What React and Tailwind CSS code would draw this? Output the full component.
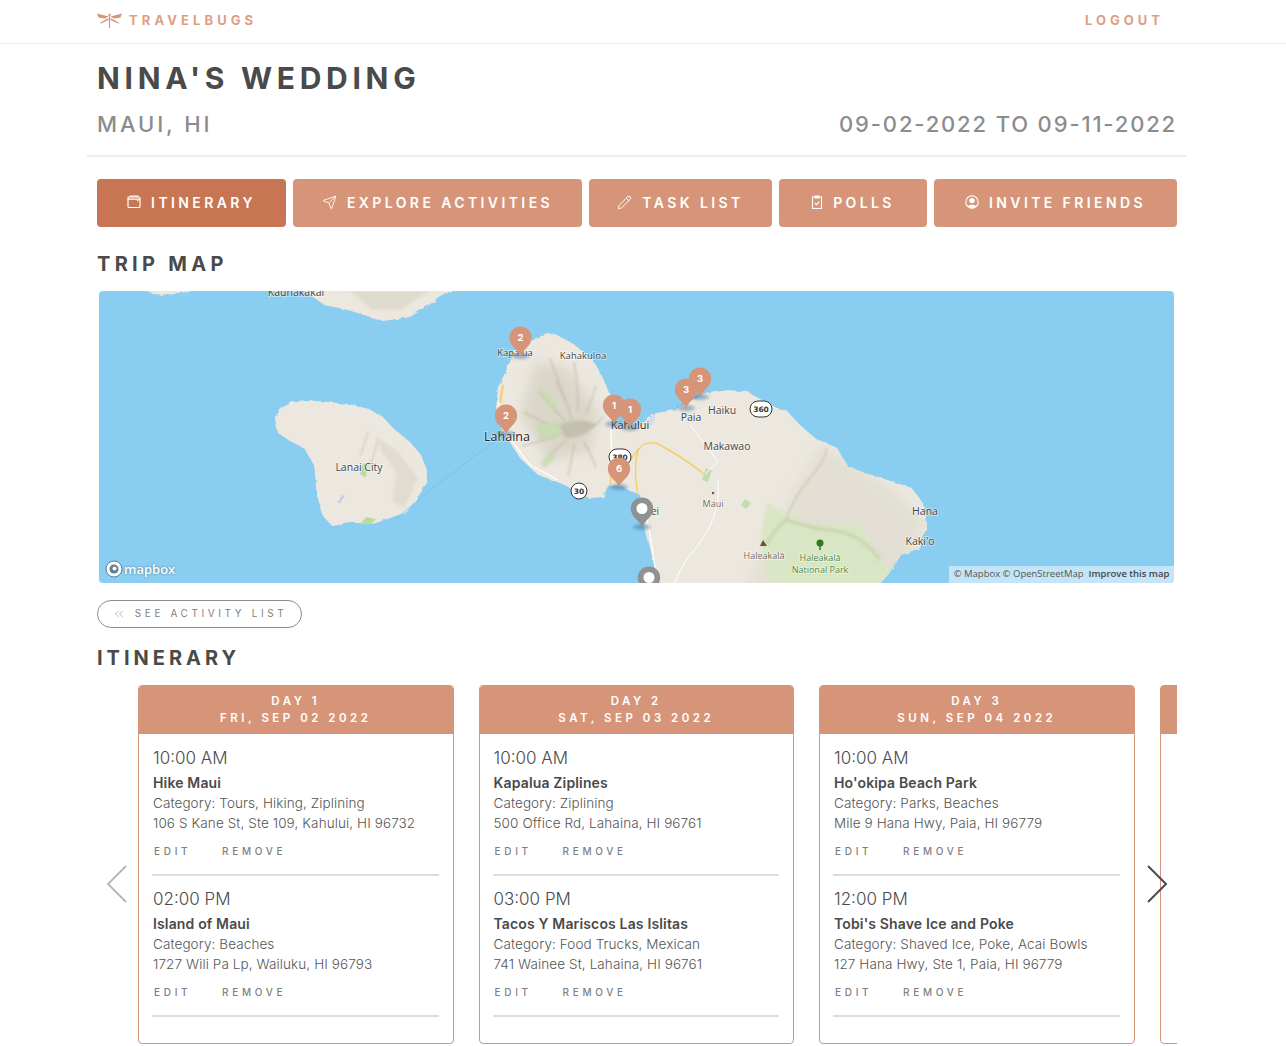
import React from "react";
import { Send, Pencil, ChevronsLeft } from "lucide-react";

const TABS = [
  { label: "ITINERARY", width: "w-[189px]", active: true, icon: "calendar" },
  { label: "EXPLORE ACTIVITIES", width: "w-[289px]", icon: "send" },
  { label: "TASK LIST", width: "w-[183px]", icon: "pencil" },
  { label: "POLLS", width: "w-[148px]", icon: "clipboard" },
  { label: "INVITE FRIENDS", width: "w-[243px]", icon: "user" },
];

const DAYS = [
  {
    day: "DAY 1",
    date: "FRI, SEP 02 2022",
    items: [
      { time: "10:00 AM", name: "Hike Maui", category: "Category: Tours, Hiking, Ziplining", address: "106 S Kane St, Ste 109, Kahului, HI 96732" },
      { time: "02:00 PM", name: "Island of Maui", category: "Category: Beaches", address: "1727 Wili Pa Lp, Wailuku, HI 96793" },
    ],
  },
  {
    day: "DAY 2",
    date: "SAT, SEP 03 2022",
    items: [
      { time: "10:00 AM", name: "Kapalua Ziplines", category: "Category: Ziplining", address: "500 Office Rd, Lahaina, HI 96761" },
      { time: "03:00 PM", name: "Tacos Y Mariscos Las Islitas", category: "Category: Food Trucks, Mexican", address: "741 Wainee St, Lahaina, HI 96761" },
    ],
  },
  {
    day: "DAY 3",
    date: "SUN, SEP 04 2022",
    items: [
      { time: "10:00 AM", name: "Ho'okipa Beach Park", category: "Category: Parks, Beaches", address: "Mile 9 Hana Hwy, Paia, HI 96779" },
      { time: "12:00 PM", name: "Tobi's Shave Ice and Poke", category: "Category: Shaved Ice, Poke, Acai Bowls", address: "127 Hana Hwy, Ste 1, Paia, HI 96779" },
    ],
  },
];

const PINS = [
  { x: 520.5, y: 356, label: "2" },
  { x: 506, y: 434, label: "2" },
  { x: 630, y: 428, label: "1" },
  { x: 614, y: 424, label: "1" },
  { x: 700, y: 397, label: "3" },
  { x: 686, y: 408, label: "3" },
  { x: 619, y: 487, label: "6" },
  { x: 642, y: 527, gray: true },
  { x: 649, y: 596, gray: true },
];

const LABELS = [
  { x: 296, y: 296, text: "Kaunakakai", size: 10.5 },
  { x: 583, y: 359, text: "Kahakuloa", size: 9.5 },
  { x: 515, y: 356, text: "Kapalua", size: 9.5 },
  { x: 507, y: 441, text: "Lahaina", size: 12.5, dark: true },
  { x: 359, y: 471, text: "Lanai City", size: 10.5 },
  { x: 630, y: 429, text: "Kahului", size: 11, dark: true },
  { x: 691, y: 421, text: "Paia", size: 10.5 },
  { x: 722, y: 414, text: "Haiku", size: 10.5 },
  { x: 727, y: 450, text: "Makawao", size: 10.5 },
  { x: 713, y: 507, text: "Maui", size: 9, color: "#7a6a5e" },
  { x: 655, y: 515, text: "ei", size: 10 },
  { x: 925, y: 515, text: "Hana", size: 10.5 },
  { x: 920, y: 545, text: "Kaki'o", size: 10.5 },
  { x: 764, y: 559, text: "Haleakalā", size: 9, color: "#7a6a5e" },
  { x: 820, y: 561, text: "Haleakalā", size: 9, color: "#4d8a3e" },
  { x: 820, y: 573, text: "National Park", size: 9, color: "#4d8a3e" },
];

// ridges running out from the west maui summit
const RIDGES = [
  "M572 420Q566 400 556 382",
  "M566 422Q550 405 540 392",
  "M560 428Q540 422 524 412",
  "M560 434Q540 442 522 446",
  "M566 440Q552 452 544 466",
  "M574 444Q572 460 568 476",
  "M584 442Q592 456 596 468",
  "M590 428Q598 424 604 416",
  "M586 414Q592 400 596 386",
  "M578 412Q578 385 574 362",
  "M570 412Q560 385 550 358",
];

const MAUI_COAST =
  "M510 362L515 350 522 345 534 338 553 333 572 343 593 360 603 378 610 395 612 420 625 427 640 425 656 413 675 410 690 401 705 393 720 390 747 391 760 399 777 408 786 410 800 425 815 438 837 448 848 467 878 477 912 488 924 505 927 525 920 548 901 555 890 572 875 590 660 590 651 552 645 528 640 495 619 485 608 486 603 497 589 498 565 485 538 475 520 458 503 432 496 408 498 388Z";

const TabIcon = ({ name }) => {
  if (name === "calendar") {
    return (
      <svg width="14" height="14" viewBox="0 0 14 14" fill="none" stroke="#fff" strokeWidth="1.2">
        <rect x="1" y="2" width="12" height="10.5" rx="1" />
        <path d="M1 4.2h12M2.5 1.2h9" />
        <rect x="10" y="5" width="1.4" height="1.4" fill="#fff" stroke="none" />
      </svg>
    );
  }
  if (name === "send") return <Send size={15} strokeWidth={1.4} color="#fff" />;
  if (name === "pencil") return <Pencil size={15} strokeWidth={1.5} color="#fff" />;
  if (name === "clipboard") {
    return (
      <svg width="12" height="14" viewBox="0 0 12 14" fill="none" stroke="#fff" strokeWidth="1.1">
        <rect x="1.5" y="2" width="9" height="11.5" />
        <path d="M4 1h4v2H4z" fill="#fff" />
        <path d="M4 8l1.6 1.6L8.2 6.6" />
      </svg>
    );
  }
  return (
    <svg width="14" height="14" viewBox="0 0 14 14">
      <circle cx="7" cy="7" r="6.2" fill="none" stroke="#fff" strokeWidth="1.1" />
      <circle cx="7" cy="5.6" r="2.7" fill="#fff" />
      <path d="M2.8 11.2C4 9.2 10 9.2 11.2 11.2 10 12.8 8.5 13.2 7 13.2S4 12.8 2.8 11.2Z" fill="#fff" />
    </svg>
  );
};

const Pin = ({ x, y, label, gray }) => (
  <g transform={`translate(${x} ${y})`}>
    <ellipse cx="0" cy="0" rx="9" ry="3" fill="#3f6f8f" opacity="0.45" filter="url(#soft)" />
    <path
      d="M0 0C-3-7-11.2-10-11.2-18.4A11.2 11.2 0 0 1 11.2-18.4C11.2-10 3-7 0 0Z"
      fill={gray ? "#8f9193" : "#d69579"}
    />
    {gray ? (
      <circle cx="0" cy="-18.5" r="5.5" fill="#fff" />
    ) : (
      <text x="0" y="-15" textAnchor="middle" fontSize="9.5" fontWeight="700" fill="#fff" fontFamily="Inter, sans-serif">
        {label}
      </text>
    )}
  </g>
);

const RouteShield = ({ x, y, text, wide }) => (
  <g>
    <rect
      x={x - (wide ? 11 : 8)}
      y={y - 8}
      width={wide ? 22 : 16}
      height="16"
      rx="8"
      fill="#fff"
      stroke="#333"
      strokeWidth="1"
    />
    <text x={x} y={y + 3} textAnchor="middle" fontSize="7.5" fontWeight="700" fill="#333" fontFamily="'DejaVu Sans', sans-serif">
      {text}
    </text>
  </g>
);

const TripMap = () => (
  <div className="relative ml-[2px] h-[292px] w-[1075px] overflow-hidden rounded-[4px] bg-[#89cdf0]">
    <svg viewBox="99 291 1075 292" width="1075" height="292" className="block">
      <defs>
        <filter id="ridge" x="-20%" y="-20%" width="140%" height="140%">
          <feGaussianBlur stdDeviation="0.8" />
        </filter>
        <filter id="soft" x="-50%" y="-50%" width="200%" height="200%">
          <feGaussianBlur stdDeviation="1.5" />
        </filter>
        <filter id="softer" x="-30%" y="-30%" width="160%" height="160%">
          <feGaussianBlur stdDeviation="6" />
        </filter>
        <filter id="rugged" x="-5%" y="-5%" width="110%" height="110%">
          <feTurbulence type="fractalNoise" baseFrequency="0.14" numOctaves="2" seed="4" />
          <feDisplacementMap in="SourceGraphic" scale="4" />
        </filter>
        <clipPath id="maui">
          <path d={MAUI_COAST} />
        </clipPath>
      </defs>

      {/* molokai along the top edge */}
      <g filter="url(#rugged)">
        <path d="M128 285L162 296 228 285ZM297 285L324 305 348 310 383 321 410 317 460 285Z" fill="#ece8e0" />
      </g>
      <path d="M350 291L372 310 400 310 430 291Z" fill="#d9d5c6" opacity="0.7" filter="url(#soft)" />

      {/* lanai */}
      <path
        filter="url(#rugged)"
        d="M274 418L283 407 293 402 317 401 348 404 369 409 383 417 393 428 410 442 421 455 427 470 426 485 417 498 407 512 390 518 376 523 352 523 332 526 324 517 317 498 317 482 314 465 304 448 288 440 277 432Z"
        fill="#ece8e0"
      />
      <path d="M376 436L398 452 418 478 404 508 392 500 396 472 382 452Z" fill="#dcd8ca" opacity="0.75" filter="url(#soft)" />
      <path d="M368 432Q364 446 360 456M378 440Q374 456 368 470" stroke="#d2cebd" strokeWidth="1.5" fill="none" filter="url(#ridge)" />
      <path d="M360 474L363 463 367 466 366 478Z" fill="#bcdc9f" />
      <path d="M360 524L366 517 376 519 372 524Z" fill="#bcdc9f" />
      <path d="M337 503L342 495 345 496 340 503Z" fill="#c5cfe8" />
      <path d="M395 520L430 490 480 452 497 440" fill="none" stroke="#7fbfe0" strokeWidth="0.8" />

      {/* maui */}
      <path filter="url(#rugged)" d={MAUI_COAST} fill="#ece8e0" />
      <g clipPath="url(#maui)">
        <path d="M535 362L568 368 598 412 590 452 548 460 520 415Z" fill="#d6d2c2" opacity="0.8" filter="url(#softer)" />
        <g stroke="#bcb8a6" strokeWidth="1.6" opacity="0.6" fill="none" filter="url(#ridge)">
          {RIDGES.map((d) => (
            <path key={d} d={d} />
          ))}
        </g>
        <path d="M558 426Q578 416 596 424Q586 438 566 438Z" fill="#b9b5a3" opacity="0.7" filter="url(#soft)" />
        <path d="M537 425L560 420 562 434 540 440Z" fill="#c4dcab" opacity="0.75" filter="url(#soft)" />
        <path d="M540 385L552 398 558 412 546 404Z" fill="#c4dcab" opacity="0.65" filter="url(#soft)" />
        <path d="M540 462L552 450 556 458 546 468Z" fill="#c4dcab" opacity="0.65" filter="url(#soft)" />
        <path d="M820 445L790 500 775 530 745 590 900 590 925 520 880 480Z" fill="#dfdbce" opacity="0.7" filter="url(#softer)" />
        <path d="M766 502L809 525 860 525 892 573 863 590 799 590 770 580 760 543Z" fill="#d9e7c4" opacity="0.9" filter="url(#ridge)" />
        <path d="M766 545Q775 528 786 520Q810 528 830 530Q860 532 880 560" fill="none" stroke="#bcc6a3" strokeWidth="2.5" opacity="0.7" filter="url(#soft)" />
        <path d="M786 520Q792 500 810 478T826 448" fill="none" stroke="#d2cebd" strokeWidth="2" filter="url(#ridge)" />
        <path d="M702 480L706 468 712 470 708 482Z" fill="#c4dcab" />
        <path d="M741 505L745 499 751 503 746 509Z" fill="#c4dcab" />
        <path d="M503 385L500 403" stroke="#f2cf5f" strokeWidth="2" fill="none" />
        <path d="M498 400L505 432 530 465 558 480" stroke="#fff" strokeWidth="1.2" fill="none" />
        <path d="M506 350L497 392" stroke="#fff" strokeWidth="1.2" fill="none" />
        <path d="M611 430L612 470 610 485" stroke="#fff" strokeWidth="1.3" fill="none" />
        <path d="M610 486L612 468" stroke="#f2cf5f" strokeWidth="1.6" fill="none" />
        <path d="M638 448Q632 475 640 503" stroke="#f2cf5f" strokeWidth="1.4" fill="none" />
        <path d="M625 470Q632 456 640 448Q642 442 656 443Q680 455 704 474" stroke="#f2cf5f" strokeWidth="1.4" fill="none" />
        <path d="M705 474L718 462Q710 450 690 425" stroke="#fff" strokeWidth="1" fill="none" />
        <path d="M718 480Q722 520 690 555Q678 570 673 590" stroke="#fff" strokeWidth="1" fill="none" />
        <path d="M645 510Q652 540 658 590" stroke="#fff" strokeWidth="1.2" fill="none" />
        <path d="M655 420L650 428 648 420 655 412Z" fill="#d5dbe9" />
      </g>

      <circle cx="713" cy="493" r="1.2" fill="#7a4b34" />
      <path d="M763 540L760 546 767 546Z" fill="#7a4b34" />
      <path d="M820 545V550" stroke="#2f7a1f" strokeWidth="1.5" />
      <circle cx="820" cy="543" r="3.5" fill="#2f7a1f" />

      <RouteShield x={761} y={409} text="360" wide />
      <RouteShield x={620} y={457} text="380" wide />
      <RouteShield x={579} y={491} text="30" />

      {LABELS.map((label) => (
        <text
          key={label.text + label.x}
          x={label.x}
          y={label.y}
          textAnchor="middle"
          fontSize={label.size}
          fill={label.color || (label.dark ? "#222" : "#444")}
          stroke="#fff"
          strokeOpacity="0.55"
          strokeWidth="1.5"
          paintOrder="stroke"
          fontFamily="'Open Sans', sans-serif"
        >
          {label.text}
        </text>
      ))}

      {PINS.map((pin, i) => (
        <Pin key={i} {...pin} />
      ))}
    </svg>

    <div className="absolute bottom-[5px] left-[6px] flex items-center gap-[1px]">
      <svg width="18" height="18" viewBox="0 0 18 18">
        <circle cx="9" cy="9" r="8" fill="#fff" stroke="#5a7f93" strokeWidth="1" />
        <circle cx="9" cy="9" r="4.5" fill="#5a7f93" />
        <circle cx="9.5" cy="8.5" r="2" fill="#fff" />
      </svg>
      <span className="font-['Open_Sans',sans-serif] text-[13px] leading-none font-semibold text-white [text-shadow:0_0_2px_#4a6f85]">
        mapbox
      </span>
    </div>
    <div className="absolute right-0 bottom-0 flex h-[17px] w-[225px] items-center justify-center gap-[5px] rounded-br-[4px] bg-[#c4e5f7] font-['Open_Sans',sans-serif] text-[9.5px] whitespace-nowrap text-[#555]">
      <span>© Mapbox © OpenStreetMap</span>
      <span className="font-semibold text-[#444]">Improve this map</span>
    </div>
  </div>
);

const Activity = ({ item }) => (
  <div className="border-b-2 border-[#dcdcdc] pt-[12px] pb-[15px] last:pt-[11px]">
    <div className="pl-[1px]">
      <div className="text-[17px] leading-[24px] font-light tracking-[0px] text-[#4a4a4a]">{item.time}</div>
      <div className="mt-[3px] text-[14px] leading-[20px] font-semibold tracking-[0.15px] whitespace-nowrap text-[#4a4a4a]">
        {item.name}
      </div>
      <div className="text-[13.5px] leading-[20px] font-light tracking-[0.1px] whitespace-nowrap text-[#555]">
        {item.category}
      </div>
      <div className="text-[13.5px] leading-[20px] font-light tracking-[0.1px] whitespace-nowrap text-[#555]">
        {item.address}
      </div>
      <div className="mt-[10px] flex pl-[1px] text-[10px] leading-[16px] font-medium tracking-[3.7px] text-[#7f7f7f]">
        <span className="w-[68px]">EDIT</span>
        <span>REMOVE</span>
      </div>
    </div>
  </div>
);

const DayCard = ({ day }) => (
  <div className="h-[359px] w-[315.5px] shrink-0 overflow-hidden rounded-[4px] border border-[#d69579]">
    <div className="flex h-[48px] flex-col items-center justify-center bg-[#d69579] text-[11.5px] leading-[17px] font-semibold tracking-[3.5px] text-white">
      <div>{day.day}</div>
      <div>{day.date}</div>
    </div>
    <div className="pr-[14px] pl-[13px]">
      {day.items.map((item) => (
        <Activity key={item.name} item={item} />
      ))}
    </div>
  </div>
);

export default function App() {
  return (
    <div className="min-h-[1046px] overflow-hidden bg-white font-['Inter',sans-serif] text-[#4a4a4a]">
      <nav className="h-[44px] border-b border-[#eeeeee]">
        <div className="flex h-[41px] items-center justify-between pr-[122px] pl-[97px]">
          <div className="flex items-center gap-[7px]">
            <svg width="25" height="15" viewBox="0 0 25 15" fill="#d69579">
              <path d="M12.5 3v12" stroke="#d69579" strokeWidth="1.2" />
              <path d="M11.5 3.5L0 .5l1.5 4 6.5 1zM13.5 3.5L25 .5l-1.5 4-6.5 1z" />
              <path d="M11.5 5L2.5 10l1.5.5 7.5-3.5zM13.5 5l9 5-1.5.5L13.5 7z" />
              <circle cx="12.5" cy="2" r="1.2" />
            </svg>
            <span className="text-[13px] font-bold tracking-[4.1px] text-[#dd9e84]">TRAVELBUGS</span>
          </div>
          <span className="text-[13px] font-bold tracking-[4px] text-[#dd9e84]">LOGOUT</span>
        </div>
      </nav>

      <main className="ml-[87px] w-[1100px]">
        <div className="border-b-2 border-[#eeeeee] px-[10px] pb-[17px]">
          <h1 className="pt-[14px] text-[30px] leading-[40px] font-bold tracking-[4.7px] text-[#4a4a4a]">
            NINA'S WEDDING
          </h1>
          <div className="mt-[12px] flex items-center justify-between text-[22px] leading-[28px] font-medium text-[#8c8c8c]">
            <span className="tracking-[2.9px]">MAUI, HI</span>
            <span className="tracking-[1.85px]">09-02-2022 TO 09-11-2022</span>
          </div>
        </div>

        <div className="px-[10px]">
          <div className="mt-[22px] flex gap-[7px]">
            {TABS.map((tab) => (
              <button
                key={tab.label}
                className={`flex h-[48px] items-center justify-center gap-[10px] rounded-[4px] pb-[2px] text-[14px] font-semibold tracking-[3.4px] text-white ${tab.width} ${
                  tab.active ? "bg-[#c77552]" : "bg-[#d69579]"
                }`}
              >
                <TabIcon name={tab.icon} />
                {tab.label}
              </button>
            ))}
          </div>

          <h2 className="mt-[23px] mb-[13px] text-[20px] leading-[28px] font-bold tracking-[4.3px] text-[#4a4a4a]">
            TRIP MAP
          </h2>
          <TripMap />

          <button className="mt-[17px] flex h-[28px] w-[205px] items-center justify-center gap-[9px] rounded-full border border-[#8c8c8c] pb-[1px] text-[10px] font-normal tracking-[3.6px] text-[#7f7f7f]">
            <ChevronsLeft size={14} strokeWidth={1} />
            SEE ACTIVITY LIST
          </button>

          <h2 className="mt-[16px] mb-[13px] text-[20px] leading-[28px] font-bold tracking-[4px] text-[#4a4a4a]">
            ITINERARY
          </h2>

          <div className="relative">
            <div className="flex gap-[25px] overflow-hidden pl-[41px]">
              {DAYS.map((day) => (
                <DayCard key={day.day} day={day} />
              ))}
              <div className="h-[359px] w-[316px] shrink-0 rounded-[4px] border border-[#d69579]">
                <div className="h-[48px] bg-[#d69579]" />
              </div>
            </div>
            <svg width="22" height="38" viewBox="0 0 22 38" fill="none" className="absolute top-[180px] left-[9px]">
              <path d="M20 1L2 19l18 18" stroke="#b5b5b5" strokeWidth="1.8" />
            </svg>
            <svg width="22" height="38" viewBox="0 0 22 38" fill="none" className="absolute top-[180px] left-[1049px]">
              <path d="M2 1l18 18L2 37" stroke="#4a4a4a" strokeWidth="2" />
            </svg>
          </div>
        </div>
      </main>
    </div>
  );
}
